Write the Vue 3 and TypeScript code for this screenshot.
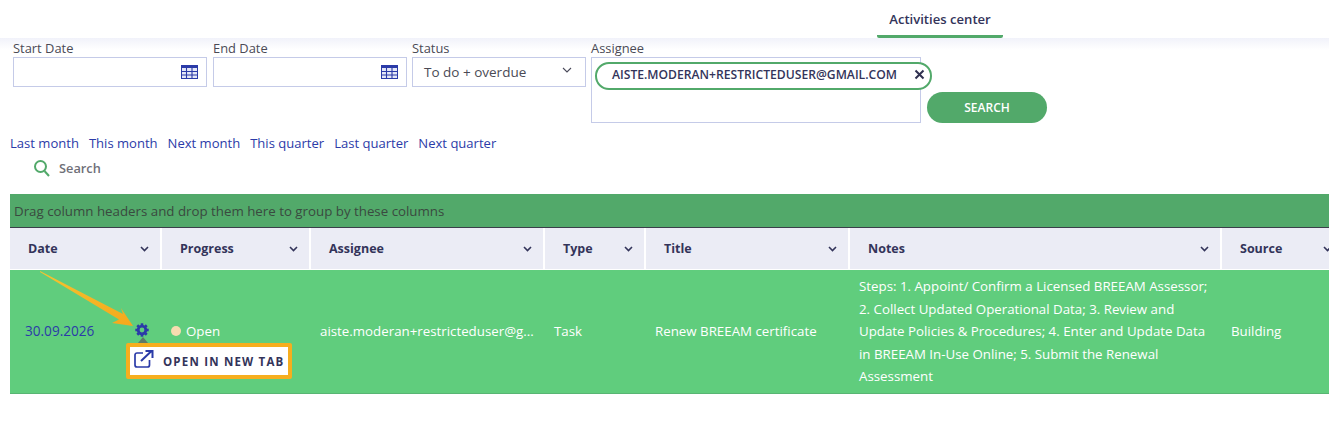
<script setup lang="ts">
const ranges: string[] = ['Last month', 'This month', 'Next month', 'This quarter', 'Last quarter', 'Next quarter']
const columns: string[] = ['Date', 'Progress', 'Assignee', 'Type', 'Title', 'Notes', 'Source']
const dateFields: string[] = ['Start Date', 'End Date']
const teeth: number[] = [0, 45, 90, 135, 180, 225, 270, 315]
</script>

<template>
  <div class="page">
    <nav class="tabs">
      <div class="tab">Activities center</div>
    </nav>
    <section class="filters">
      <div class="fields">
        <div v-for="f in dateFields" :key="f" class="field date">
          <label>{{ f }}</label>
          <div class="box">
            <svg class="cal" width="17" height="14" viewBox="0 0 17 14">
              <rect x="0.5" y="0.5" width="16" height="13" fill="#e4e7f7" stroke="#2b3ba8" />
              <rect x="0" y="0" width="17" height="3" fill="#2b3ba8" />
              <path d="M5.5 0v14M11 0v14M0 6.500h17M0 10h17" stroke="#2b3ba8" stroke-width="1.100" fill="none" />
            </svg>
          </div>
        </div>
        <div class="field status">
          <label>Status</label>
          <div class="box select">
            <span>To do + overdue</span>
            <svg width="10" height="6" viewBox="0 0 10 6"><path d="M1 1l4 4 4-4" stroke="#4a4a5a" stroke-width="1.100" fill="none" /></svg>
          </div>
        </div>
        <div class="field assignee">
          <label>Assignee</label>
          <div class="box multi">
            <div class="chip">
              <span>AISTE.MODERAN+RESTRICTEDUSER@GMAIL.COM</span>
              <svg width="11" height="11" viewBox="0 0 11 11"><path d="M1.500 1.500l8 8M9.500 1.500l-8 8" stroke="#2f3050" stroke-width="2" /></svg>
            </div>
          </div>
        </div>
        <button class="search-btn">SEARCH</button>
      </div>
      <div class="ranges">
        <a v-for="r in ranges" :key="r">{{ r }}</a>
      </div>
      <div class="quick">
        <svg width="18" height="18" viewBox="0 0 18 18">
          <circle cx="7.500" cy="7.500" r="5.500" fill="none" stroke="#52a96a" stroke-width="2" />
          <path d="M11.500 12l4.500 5" stroke="#52a96a" stroke-width="2" />
        </svg>
        <span>Search</span>
      </div>
    </section>
    <section class="grid">
      <div class="group">Drag column headers and drop them here to group by these columns</div>
      <div class="head cols">
        <div v-for="c in columns" :key="c" class="hcell">
          <span>{{ c }}</span>
          <svg width="9" height="6" viewBox="0 0 9 6"><path d="M1 1l3.500 3.500L8 1" stroke="#33345a" stroke-width="1.600" fill="none" /></svg>
        </div>
      </div>
      <div class="row cols">
        <div class="cell date-cell">
          <a class="date-link">30.09.2026</a>
          <svg class="gear" width="14" height="14" viewBox="0 0 14 14">
            <circle cx="7" cy="7" r="3.800" fill="none" stroke="#2b3ba8" stroke-width="2.800" />
            <rect v-for="t in teeth" :key="t" x="5.700" y="0.300" width="2.600" height="3" fill="#2b3ba8" :transform="`rotate(${t} 7 7)`" />
          </svg>
          <div class="popup">
            <i class="caret"></i>
            <svg width="20" height="18" viewBox="0 0 20 18">
              <path d="M9 3H3A2 2 0 0 0 1 5v10a2 2 0 0 0 2 2h10.500a2 2 0 0 0 2-2V10" fill="none" stroke="#2b3ba8" stroke-width="1.700" />
              <path d="M7 11L17 1.500M11.500 1h7v7" fill="none" stroke="#2b3ba8" stroke-width="2" />
            </svg>
            <span>OPEN IN NEW TAB</span>
          </div>
        </div>
        <div class="cell progress"><i class="dot"></i>Open</div>
        <div class="cell">aiste.moderan+restricteduser@g...</div>
        <div class="cell">Task</div>
        <div class="cell">Renew BREEAM certificate</div>
        <div class="cell notes">Steps: 1. Appoint/ Confirm a Licensed BREEAM Assessor; 2. Collect Updated Operational Data; 3. Review and Update Policies &amp; Procedures; 4. Enter and Update Data in BREEAM In-Use Online; 5. Submit the Renewal Assessment</div>
        <div class="cell">Building</div>
      </div>
      <svg class="arrow" width="110" height="62" viewBox="0 0 110 62">
        <defs>
          <linearGradient id="arrowFill" x1="0" y1="0" x2="1" y2="1">
            <stop offset="0" stop-color="#f4c430" />
            <stop offset="1" stop-color="#f5a81c" />
          </linearGradient>
        </defs>
        <path d="M0 0L83 43 81 37 93 55 72 52 79 48.500 0 1z" fill="url(#arrowFill)" />
      </svg>
    </section>
  </div>
</template>

<style>
html, body { margin: 0; background: #fff; overflow: hidden; }
</style>

<style scoped>
.page {
  width: 1329px;
  height: 433px;
  overflow: hidden;
  font-family: "Open Sans", "Noto Sans", sans-serif;
  font-size: 13px;
  color: #3a3a4a;
}
.tabs {
  height: 38px;
  display: flex;
  justify-content: flex-end;
  padding-right: 326px;
  box-sizing: border-box;
}
.tab {
  width: 126px;
  height: 38px;
  box-sizing: border-box;
  border-bottom: 3px solid #52a96a;
  text-align: center;
  font-size: 13.1px;
  font-weight: 600;
  line-height: 39px;
  color: #33345a;
  border-radius: 0 0 2px 2px;
}
.filters {
  background: linear-gradient(#f1f2fa, #fff 12px);
  height: 156px;
}
.fields {
  display: flex;
  align-items: flex-start;
  padding-left: 13px;
  position: relative;
}
.field label {
  display: block;
  height: 19px;
  line-height: 21px;
  font-size: 12.9px;
  color: #4a4a55;
}
.box {
  box-sizing: border-box;
  height: 30px;
  border: 1px solid #c5cbe8;
  background: #fff;
}
.date { width: 194px; margin-right: 6px; }
.date .box { display: flex; align-items: center; justify-content: flex-end; padding-right: 8px; }
.status { width: 174px; margin-right: 5px; margin-left: -1px; }
.select {
  display: flex;
  align-items: center;
  justify-content: space-between;
  padding: 0 13px 0 11px;
  font-size: 13.5px;
  color: #4a4a55;
}
.select svg { margin-top: -4px; }
.assignee { width: 330px; }
.multi {
  height: 66px;
  padding-top: 4px;
  padding-left: 3px;
}
.chip {
  width: 337px;
  height: 28px;
  box-sizing: border-box;
  border: 2.5px solid #52a96a;
  border-radius: 14px;
  background: #fff;
  display: flex;
  align-items: center;
  justify-content: space-between;
  padding: 0 5px 3px 15px;
  font-size: 12.15px;
  font-weight: 600;
  color: #33345a;
  white-space: nowrap;
}
.chip svg { margin-top: -1px; }
.search-btn {
  margin: 54px 0 0 6px;
  width: 120px;
  height: 31px;
  border: 0;
  border-radius: 16px;
  background: #52a96a;
  color: #fff;
  font: 600 12px "Open Sans", sans-serif;
}
.ranges {
  display: flex;
  gap: 10px;
  padding-left: 10px;
  margin-top: 10px;
  line-height: 20px;
  font-size: 13.05px;
  color: #2b3ba8;
}
.quick {
  display: flex;
  align-items: center;
  gap: 8px;
  padding-left: 33px;
  margin-top: 5px;
  height: 20px;
  font-size: 12.8px;
  font-weight: 600;
  color: #6f6f78;
}
.grid {
  position: relative;
  margin-left: 10px;
  width: 1350px;
}
.group {
  height: 33px;
  line-height: 35px;
  padding-left: 4px;
  background: #52a96a;
  border-bottom: 1px solid #3a3f4a;
  font-size: 13.3px;
  color: #3a4a40;
}
.cols {
  display: grid;
  grid-template-columns: 152px 149px 234px 101px 204px 372px 123px;
}
.head { height: 42px; background: #fff; }
.hcell {
  background: #ebecf5;
  margin-right: 2px;
  height: 41px;
  box-sizing: border-box;
  display: flex;
  align-items: center;
  justify-content: space-between;
  padding: 0 11px 0 18px;
  font-size: 12.5px;
  font-weight: 700;
  color: #33345a;
}
.row {
  height: 123px;
  background: #60cd7d;
  border-bottom: 1px solid #58b573;
  color: #fff;
  font-size: 13.3px;
  align-items: center;
}
.cell {
  padding: 0 9px 2px;
  box-sizing: border-box;
  min-width: 0;
  white-space: nowrap;
}
.date-cell {
  position: relative;
  padding-left: 15px;
  display: flex;
  align-items: center;
}
.date-link { color: #2b3ba8; font-size: 13.6px; }
.gear { position: absolute; left: 125px; top: 2px; }
.progress {
  display: flex;
  align-items: center;
  gap: 5px;
}
.dot {
  width: 10px;
  height: 10px;
  border-radius: 50%;
  background: #f8dcb0;
}
.notes { line-height: 22.6px; padding-right: 10px; padding-bottom: 0; white-space: normal; }
.popup {
  position: absolute;
  left: 116px;
  top: 22px;
  width: 166px;
  height: 36px;
  box-sizing: border-box;
  border: 4px solid #f6ae1e;
  border-radius: 2px;
  background: #fff;
  display: flex;
  align-items: center;
  padding-left: 4px;
  gap: 9px;
  color: #33345a;
  font-size: 11.5px;
  font-weight: 700;
  letter-spacing: 1.2px;
  white-space: nowrap;
}
.popup svg { margin-top: -5px; }
.caret {
  position: absolute;
  left: 8px;
  top: -10px;
  border-left: 5px solid transparent;
  border-right: 5px solid transparent;
  border-bottom: 6px solid #5d7a68;
}
.arrow {
  position: absolute;
  left: 30px;
  top: 77px;
}
</style>
